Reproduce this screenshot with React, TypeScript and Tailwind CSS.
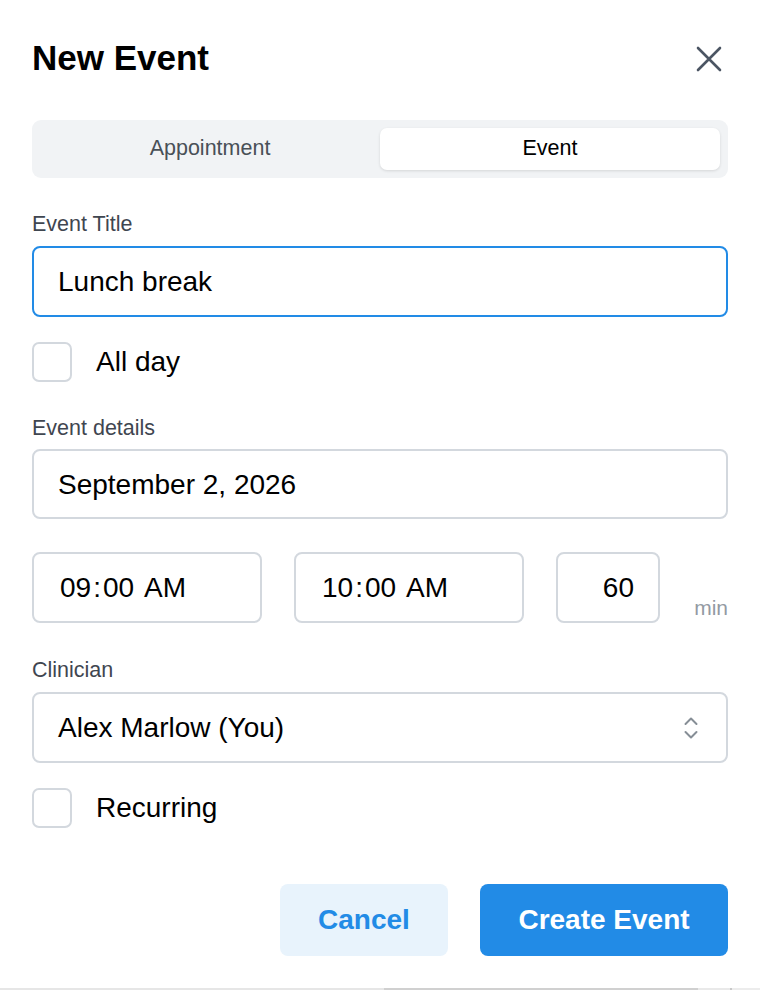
import { useState } from "react";

function CloseIcon() {
  return (
    <svg width="26" height="26" viewBox="0 0 26 26" fill="none" aria-hidden="true">
      <path d="M2 2L24 24M24 2L2 24" stroke="#4b5563" strokeWidth="2.6" strokeLinecap="round" />
    </svg>
  );
}

function UpDownIcon() {
  return (
    <svg width="16" height="24" viewBox="0 0 16 24" fill="none" aria-hidden="true">
      <path d="M2.5 8L8 2.5L13.5 8" stroke="#868e96" strokeWidth="2" strokeLinecap="round" strokeLinejoin="round" />
      <path d="M2.5 16L8 21.5L13.5 16" stroke="#868e96" strokeWidth="2" strokeLinecap="round" strokeLinejoin="round" />
    </svg>
  );
}

function Checkbox({ label }: { label: string }) {
  const [checked, setChecked] = useState(false);
  return (
    <label className="flex items-center h-10 cursor-pointer">
      <button
        type="button"
        onClick={() => setChecked(!checked)}
        className="w-10 h-10 rounded-[7px] border-2 border-[#d3d8de] bg-white"
      />
      <span className="ml-6 text-[28px] leading-[40px] text-black">{label}</span>
    </label>
  );
}

function Label({ children, className = "" }: { children: string; className?: string }) {
  return <div className={`text-[21.5px] leading-[27px] pt-[1px] text-[#3f4650] ${className}`}>{children}</div>;
}

// time inputs render with a little room around the colon and before AM/PM
function TimeText({ h, m, ampm }: { h: string; m: string; ampm: string }) {
  return (
    <span className="flex items-center">
      <span>{h}</span>
      <span className="mx-[2px]">:</span>
      <span>{m}</span>
      <span className="ml-[10px]">{ampm}</span>
    </span>
  );
}

export default function App() {
  const [tab, setTab] = useState<"appointment" | "event">("event");

  return (
    <div className="w-[760px] h-[990px] bg-white flex flex-col font-['Liberation_Sans',Arial,sans-serif] overflow-hidden">
      <div className="px-8 pt-[37px]">
        {/* Header */}
        <div className="flex items-center justify-between h-[42px]">
          <h1 className="text-[35px] leading-[42px] font-bold text-black">New Event</h1>
          <button type="button" className="mr-[6px] mt-[2px]">
            <CloseIcon />
          </button>
        </div>

        {/* Segmented control */}
        <div className="mt-[41px] h-[58px] rounded-[9px] bg-[#f1f3f5] p-2 flex">
          <button
            type="button"
            onClick={() => setTab("appointment")}
            className={`flex-1 rounded-[7px] text-[21.5px] pb-[2px] ${
              tab === "appointment" ? "bg-white text-black shadow-[0_1px_3px_rgba(0,0,0,0.12)]" : "text-[#495057]"
            }`}
          >
            Appointment
          </button>
          <button
            type="button"
            onClick={() => setTab("event")}
            className={`flex-1 rounded-[7px] text-[21.5px] pb-[2px] ${
              tab === "event" ? "bg-white text-black shadow-[0_1px_3px_rgba(0,0,0,0.12)]" : "text-[#495057]"
            }`}
          >
            Event
          </button>
        </div>

        {/* Title */}
        <Label className="mt-8">Event Title</Label>
        <div className="mt-2 h-[71px] rounded-[8px] border-2 border-[#228be6] flex items-center px-6 pt-[1px] text-[28px] text-black">
          Lunch break
        </div>

        <div className="mt-[25px]">
          <Checkbox label="All day" />
        </div>

        {/* Details */}
        <Label className="mt-8">Event details</Label>
        <div className="mt-[7px] h-[70px] rounded-[8px] border-2 border-[#d3d8de] flex items-center px-6 pt-[1px] text-[28px] text-black">
          September 2, 2026
        </div>

        <div className="mt-[33px] flex h-[71px]">
          <div className="w-[230px] rounded-[8px] border-2 border-[#d3d8de] flex items-center pl-[26px] pt-[1px] text-[28px] text-black">
            <TimeText h="09" m="00" ampm="AM" />
          </div>
          <div className="ml-8 w-[230px] rounded-[8px] border-2 border-[#d3d8de] flex items-center pl-[26px] pt-[1px] text-[28px] text-black">
            <TimeText h="10" m="00" ampm="AM" />
          </div>
          <div className="ml-8 w-[104px] rounded-[8px] border-2 border-[#d3d8de] flex items-center justify-end pr-[24px] pt-[1px] text-[28px] text-black">
            60
          </div>
          <span className="ml-auto self-end text-[21px] leading-[28px] text-[#939aa3] mb-[1px]">min</span>
        </div>

        {/* Clinician */}
        <Label className="mt-[33px]">Clinician</Label>
        <div className="mt-2 h-[71px] rounded-[8px] border-2 border-[#d3d8de] flex items-center justify-between pl-6 pr-[27px] pt-[1px] text-[28px] text-black">
          <span>Alex Marlow (You)</span>
          <UpDownIcon />
        </div>

        <div className="mt-[25px]">
          <Checkbox label="Recurring" />
        </div>

        {/* Actions */}
        <div className="mt-[56px] flex justify-end gap-8">
          <button
            type="button"
            className="w-[168px] h-[72px] rounded-[8px] bg-[#e8f3fc] text-[#228be6] text-[28px] font-bold"
          >
            Cancel
          </button>
          <button
            type="button"
            className="w-[248px] h-[72px] rounded-[8px] bg-[#228be6] text-white text-[28px] font-bold"
          >
            Create Event
          </button>
        </div>
      </div>

      {/* Horizontal scrollbar */}
      <div className="mt-auto h-[2px] flex">
        <div className="w-[384px] bg-[#e6e6e6]" />
        <div className="w-[314px] bg-[#d0d0d0]" />
        <div className="w-[32px] bg-[#e9e9e9]" />
        <div className="w-[2px] bg-[#c8c8c8]" />
        <div className="flex-1 bg-[#ececec]" />
      </div>
    </div>
  );
}
